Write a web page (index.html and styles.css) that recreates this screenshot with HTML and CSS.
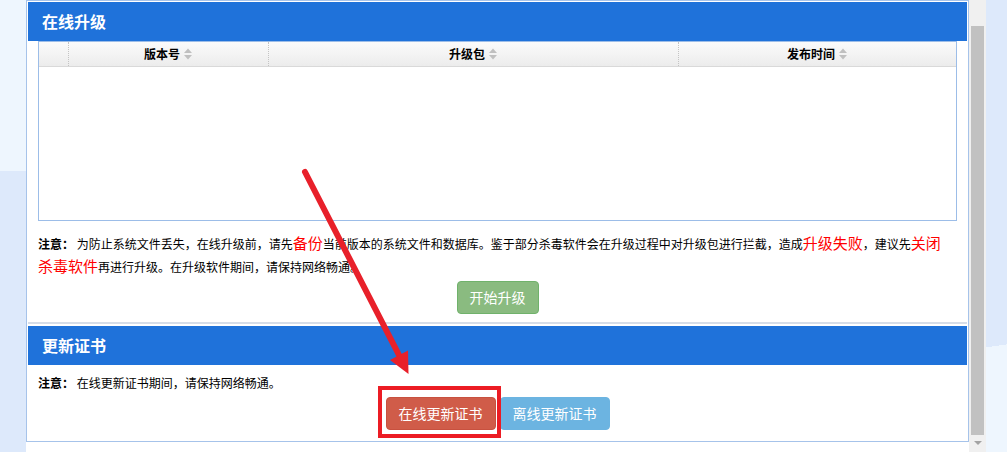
FILE: index.html
```html
<!DOCTYPE html>
<html lang="zh-CN">
<head>
<meta charset="utf-8">
<title>在线升级</title>
<link rel="stylesheet" href="styles.css">
</head>
<body>
<div class="page">
  <div class="side-left"></div>
  <div class="main">
    <div class="frame">
      <section class="sec sec-upgrade">
        <div class="sec-head">在线升级</div>
        <div class="grid">
          <div class="grid-head">
            <div class="gh gh-check"></div>
            <div class="gh"><span>版本号</span><svg class="sort" viewBox="0 0 10 14" width="10" height="14"><path d="M1 6 L5 1.5 L9 6 Z M1 8 L5 12.5 L9 8 Z"/></svg></div>
            <div class="gh"><span>升级包</span><svg class="sort" viewBox="0 0 10 14" width="10" height="14"><path d="M1 6 L5 1.5 L9 6 Z M1 8 L5 12.5 L9 8 Z"/></svg></div>
            <div class="gh gh-last"><span>发布时间</span><svg class="sort" viewBox="0 0 10 14" width="10" height="14"><path d="M1 6 L5 1.5 L9 6 Z M1 8 L5 12.5 L9 8 Z"/></svg></div>
          </div>
          <div class="grid-body"></div>
        </div>
        <p class="note"><b>注意：</b> 为防止系统文件丢失，在线升级前，请先<span class="red">备份</span>当前版本的系统文件和数据库。鉴于部分杀毒软件会在升级过程中对升级包进行拦截，造成<span class="red">升级失败</span>，建议先<span class="red">关闭</span><span class="red keep">杀毒软件</span>再进行升级。在升级软件期间，请保持网络畅通。</p>
        <div class="actions">
          <button class="btn btn-green">开始升级</button>
        </div>
      </section>
      <section class="sec sec-cert">
        <div class="sec-head">更新证书</div>
        <p class="note"><b>注意：</b> 在线更新证书期间，请保持网络畅通。</p>
        <div class="actions">
          <button class="btn btn-red">在线更新证书</button>
          <button class="btn btn-blue">离线更新证书</button>
        </div>
      </section>
    </div>
  </div>
  <div class="scrollbar">
    <div class="sb-top"></div>
    <div class="sb-thumb"></div>
    <div class="sb-bottom"><span class="sb-arrow"></span></div>
  </div>
  <div class="side-right"></div>

  <div class="mark-box"></div>
  <svg class="mark-arrow" viewBox="0 0 1007 452" width="1007" height="452">
    <line x1="305" y1="172" x2="401" y2="359" stroke="#e8202a" stroke-width="6" stroke-linecap="round"/>
    <polygon points="390,360 408,350.5 408.5,374" fill="#e8202a"/>
  </svg>
</div>
</body>
</html>
```

FILE: styles.css
```css
* { box-sizing: border-box; }

html, body {
  margin: 0;
  padding: 0;
}

body {
  width: 1007px;
  height: 452px;
  overflow: hidden;
  font-family: "Noto Sans CJK SC", "Noto Sans", sans-serif;
  color: #000;
}

.page {
  position: relative;
  display: flex;
  width: 1007px;
  height: 452px;
}

.side-left {
  width: 26px;
  background: linear-gradient(to bottom, #eef6fe 0, #eef6fe 171px, #dde9fb 171px, #dde9fb 100%);
}

.side-right {
  width: 21px;
  background: linear-gradient(172deg, #dde9fb 0, #dde9fb 344px, #eef6fe 344px, #eef6fe 100%);
}

.main {
  width: 943px;
  background: #fff;
}

.frame {
  height: 442px;
  border: 1px solid #a6c3ea;
  padding: 1px;
  background: #fff;
}

.sec-head {
  height: 39px;
  line-height: 39px;
  padding-left: 14px;
  background: #1f72da;
  color: #fff;
  font-size: 16px;
  font-weight: bold;
}

.sec-upgrade {
  border-bottom: 2px solid #d6dde8;
  padding-bottom: 8px;
  margin-bottom: 2px;
}

.grid {
  margin: 0 10px;
  height: 180px;
  border: 1px solid #9cbde8;
  display: flex;
  flex-direction: column;
}

.grid-head {
  display: grid;
  grid-template-columns: 30px 200px 410px 1fr;
  height: 25px;
  background: linear-gradient(to bottom, #fbfbfb, #ececec);
  border-bottom: 1px solid #d9d9d9;
}

.gh {
  display: flex;
  align-items: center;
  justify-content: center;
  gap: 3px;
  border-right: 1px dotted #c4c4c4;
  font-size: 12px;
  font-weight: bold;
  line-height: 24px;
}

.gh-last { border-right: none; }

.sort { fill: #c0c0c0; }

.grid-body {
  flex: 1;
  background: #fff;
}

.note {
  margin: 0;
  padding: 11px 10px 0;
  font-size: 12px;
  line-height: 23px;
}

.sec-cert .note { padding-top: 6px; }

.note b { font-weight: bold; }

.red {
  color: #ff0000;
  font-size: 15px;
  line-height: 15px;
}

.keep { white-space: nowrap; }

.actions {
  display: flex;
  justify-content: center;
  gap: 4px;
  margin-top: 3px;
}

.btn {
  height: 33px;
  padding: 6px 12px;
  border: 1px solid transparent;
  border-radius: 4px;
  font-family: inherit;
  font-size: 14px;
  line-height: 19px;
  color: #fff;
}

.btn-green {
  background: #8abb80;
  border-color: #70b26b;
}

.btn-red {
  background: #d05c49;
  border-color: #c8513f;
}

.btn-blue {
  background: #6cb4e1;
  border-color: #6cb4e1;
}

.scrollbar {
  width: 17px;
  background: #f0f0f0;
  display: flex;
  flex-direction: column;
}

.sb-top { height: 26px; }

.sb-thumb {
  height: 409px;
  margin: 0 2px;
  background: #c1c1c1;
}

.sb-bottom {
  flex: 1;
  display: flex;
  justify-content: center;
  padding-top: 6px;
}

.sb-arrow {
  width: 0;
  height: 0;
  border-left: 4px solid transparent;
  border-right: 4px solid transparent;
  border-top: 4px solid #a3a3a3;
}

.mark-box {
  position: absolute;
  left: 378px;
  top: 386px;
  width: 123px;
  height: 52px;
  border: 4px solid #ec1c24;
}

.mark-arrow {
  position: absolute;
  left: 0;
  top: 0;
  pointer-events: none;
}
```
